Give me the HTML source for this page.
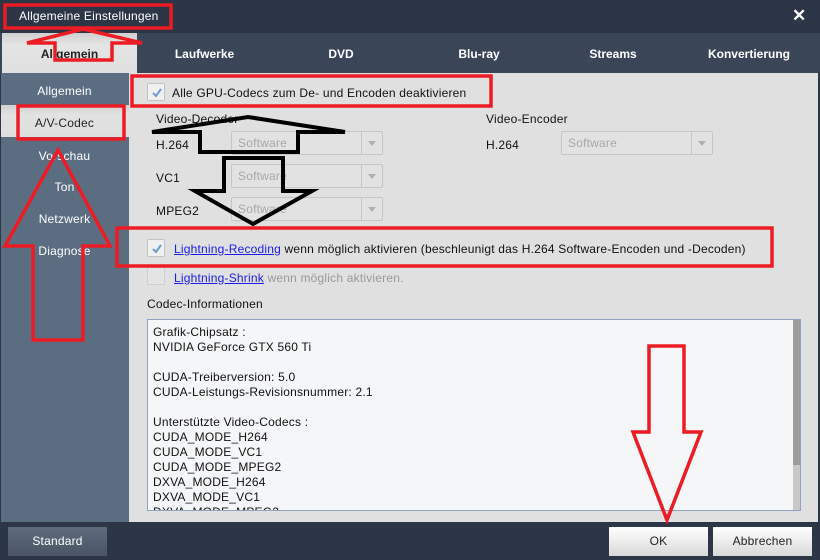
<!DOCTYPE html>
<html><head><meta charset="utf-8"><style>
*{margin:0;padding:0;box-sizing:border-box}
body{width:820px;height:560px;overflow:hidden;background:#2c3647;font-family:"Liberation Sans",Arial,sans-serif;font-size:12px;position:relative;letter-spacing:0.2px}
.a{position:absolute;white-space:nowrap}
.tab{position:absolute;top:33px;height:40px;line-height:42px;color:#fff;font-weight:bold;font-size:12px;text-align:center;letter-spacing:0}
.side{position:absolute;left:0;width:129px;text-align:center;color:#fff;font-size:12px}
.dd{position:absolute;width:152px;height:24px;border:1px solid #c6c6c6;background:#e2e2e2;border-radius:2px;color:#a8a8a8;line-height:22px;padding-left:6px}
.dd:after{content:"";position:absolute;right:0;top:0;width:20px;height:22px;border-left:1px solid #c6c6c6}
.dd i{position:absolute;right:6px;top:9px;width:0;height:0;border-left:4px solid transparent;border-right:4px solid transparent;border-top:5px solid #b0b0b0}
.cb{position:absolute;width:18px;height:18px;border:1px solid #c4c4c4;background:#f0f0f0;border-radius:2px}
.cb svg{position:absolute;left:2px;top:2px}
a{color:#1a1aee;text-decoration:underline}
.btn{position:absolute;top:527px;height:29px;line-height:29px;text-align:center;font-size:12px}
</style></head><body>
<div class="a" style="left:19px;top:9px;color:#fff;font-size:12px">Allgemeine Einstellungen</div>
<div class="a" style="left:792px;top:6px;color:#fff;font-weight:bold;font-size:17px">✕</div>
<div style="position:absolute;left:0;top:33px;width:820px;height:40px;background:#3a4658"></div>
<div style="position:absolute;left:2px;top:33px;width:135px;height:40px;background:linear-gradient(#d0d0d0,#e4e4e4 30%,#e0e0e0)"></div>
<div class="tab" style="left:2px;width:135px;color:#222">Allgemein</div>
<div class="tab" style="left:137px;width:135px">Laufwerke</div>
<div class="tab" style="left:272px;width:138px">DVD</div>
<div class="tab" style="left:410px;width:138px">Blu-ray</div>
<div class="tab" style="left:548px;width:130px">Streams</div>
<div class="tab" style="left:678px;width:142px">Konvertierung</div>
<div style="position:absolute;left:1px;top:73px;width:128px;height:449px;background:#5b6d80"></div>
<div style="position:absolute;left:1px;top:105px;width:128px;height:32px;background:linear-gradient(#cfcfcf,#e2e2e2 30%,#dedede)"></div>
<div class="side" style="top:84px">Allgemein</div>
<div class="side" style="top:116px;color:#222">A/V-Codec</div>
<div class="side" style="top:149px">Vorschau</div>
<div class="side" style="top:180px">Ton</div>
<div class="side" style="top:212px">Netzwerk</div>
<div class="side" style="top:244px">Diagnose</div>
<div style="position:absolute;left:129px;top:73px;width:689px;height:449px;background:#e0e0e0"></div>
<div class="cb" style="left:147px;top:83px"><svg width="14" height="14"><path d="M3 7l3 3 5-7" stroke="#6d9ad0" stroke-width="2" fill="none"/></svg></div>
<div class="a" style="left:172px;top:86px;color:#111">Alle GPU-Codecs zum De- und Encoden deaktivieren</div>
<div class="a" style="left:156px;top:112px;color:#111">Video-Decoder</div>
<div class="a" style="left:486px;top:112px;color:#111">Video-Encoder</div>
<div class="a" style="left:156px;top:138px;color:#111">H.264</div>
<div class="a" style="left:156px;top:171px;color:#111">VC1</div>
<div class="a" style="left:156px;top:204px;color:#111">MPEG2</div>
<div class="a" style="left:486px;top:138px;color:#111">H.264</div>
<div class="dd" style="left:231px;top:131px">Software<i></i></div>
<div class="dd" style="left:231px;top:164px">Software<i></i></div>
<div class="dd" style="left:231px;top:197px">Software<i></i></div>
<div class="dd" style="left:561px;top:131px">Software<i></i></div>
<div class="cb" style="left:147px;top:239px"><svg width="14" height="14"><path d="M3 7l3 3 5-7" stroke="#6d9ad0" stroke-width="2" fill="none"/></svg></div>
<div class="a" style="left:174px;top:242px;color:#111"><a>Lightning-Recoding</a> wenn möglich aktivieren (beschleunigt das H.264 Software-Encoden und -Decoden)</div>
<div class="cb" style="left:147px;top:267px;background:#e4e4e4;border-color:#cfcfcf"></div>
<div class="a" style="left:174px;top:271px;color:#9a9a9a"><a>Lightning-Shrink</a> wenn möglich aktivieren.</div>
<div class="a" style="left:147px;top:297px;color:#111">Codec-Informationen</div>
<div style="position:absolute;left:147px;top:319px;width:654px;height:192px;background:#f5f6f8;border:1px solid #8fa3c0;overflow:hidden">
<div style="position:absolute;right:0;top:0;width:7px;height:190px;background:#c8c8c8"></div>
<div style="position:absolute;right:0;top:0;width:7px;height:145px;background:#9c9c9c"></div>
<div style="position:absolute;left:5px;top:5px;line-height:15px;color:#111">Grafik-Chipsatz :<br>NVIDIA GeForce GTX 560 Ti<br><br>CUDA-Treiberversion: 5.0<br>CUDA-Leistungs-Revisionsnummer: 2.1<br><br>Unterstützte Video-Codecs :<br>CUDA_MODE_H264<br>CUDA_MODE_VC1<br>CUDA_MODE_MPEG2<br>DXVA_MODE_H264<br>DXVA_MODE_VC1<br>DXVA_MODE_MPEG2</div>
</div>
<div class="btn" style="left:8px;width:99px;background:linear-gradient(#5e6b7c,#4a5666);color:#fff">Standard</div>
<div class="btn" style="left:609px;width:99px;background:linear-gradient(#fff,#d8d8d8);color:#222">OK</div>
<div class="btn" style="left:713px;width:99px;background:linear-gradient(#fff,#d8d8d8);color:#222">Abbrechen</div>
<svg style="position:absolute;left:0;top:0" width="820" height="560">
<g fill="none" stroke="#000" stroke-width="4">
<path d="M248 117L345 132H298V152H200V132H152Z"/>
<path d="M224 158H283V191H312L253 224L195 191H224Z"/>
</g>
<g fill="none" stroke="#ed1c24" stroke-width="3.5">
<rect x="5" y="5" width="166" height="23"/>
<path d="M83 29L142 43H112V60H55V43H27Z"/>
<rect x="132" y="76" width="359" height="30"/>
<rect x="18" y="106" width="106" height="33"/>
<path d="M58 150L110 246H83V340H33V246H5Z"/>
<rect x="117" y="228" width="655" height="38"/>
<path d="M649 346H684V432H701L667 520L633 432H649Z"/>
</g>
</svg>
</body></html>
